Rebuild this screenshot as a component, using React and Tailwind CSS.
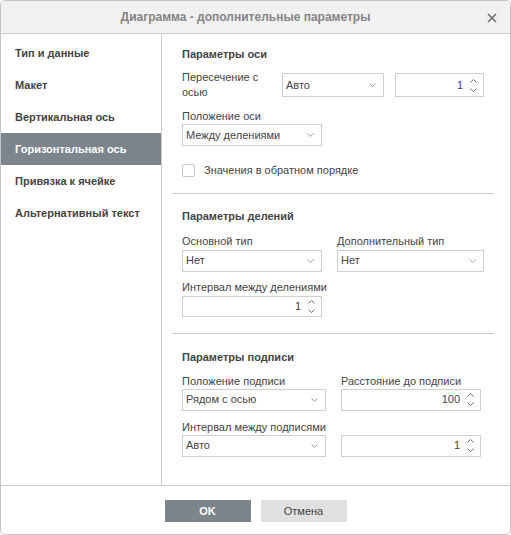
import React from "react";

const F = { fontFamily: '"Liberation Sans", Arial, sans-serif' };

function Chevron({ up = false }) {
  return (
    <svg width="7" height="4" viewBox="0 0 7 4" className="block">
      {up ? (
        <path d="M0.5 3.5 L3.5 0.5 L6.5 3.5" fill="none" stroke="#6b6b6b" strokeWidth="1" />
      ) : (
        <path d="M0.5 0.5 L3.5 3.5 L6.5 0.5" fill="none" stroke="#6b6b6b" strokeWidth="1" />
      )}
    </svg>
  );
}

function Select({ value, w, h = 22 }) {
  return (
    <div
      className="flex items-center justify-between border border-[#cfcfcf] bg-white pl-[3px] pr-[7px] text-[11px] text-[#444]"
      style={{ width: w, height: h }}
    >
      <span>{value}</span>
      <svg width="7" height="4" viewBox="0 0 7 4" className="block">
        <path d="M0.5 0.5 L3.5 3.5 L6.5 0.5" fill="none" stroke="#a0a0a0" strokeWidth="1" />
      </svg>
    </div>
  );
}

function Spinner({ value, w, h = 22 }) {
  return (
    <div
      className="flex items-center justify-end border border-[#cfcfcf] bg-white pr-[6px] text-[11px] text-[#444]"
      style={{ width: w, height: h }}
    >
      <span className="mr-[7px]">{value}</span>
      <div className="flex flex-col gap-[5px]">
        <Chevron up />
        <Chevron />
      </div>
    </div>
  );
}

function Label({ children, className = "" }) {
  return <div className={"h-[14px] leading-[14px] text-[11px] text-[#444] " + className}>{children}</div>;
}

function Title({ children, className = "" }) {
  return (
    <div className={"h-[14px] leading-[14px] text-[11px] font-bold text-[#444] " + className}>{children}</div>
  );
}

export default function App() {
  const items = [
    "Тип и данные",
    "Макет",
    "Вертикальная ось",
    "Горизонтальная ось",
    "Привязка к ячейке",
    "Альтернативный текст",
  ];
  return (
    <div style={F} className="w-[511px] h-[535px] bg-white">
      <div className="flex h-full w-full flex-col overflow-hidden rounded-[5px] border border-[#c4c4c4] bg-white">
        {/* header */}
        <div className="relative flex h-[33px] shrink-0 items-center justify-center border-b border-[#cbcbcb] bg-[#f1f1f1] pr-[20px]">
          <span className="text-[12px] font-bold text-[#848484]">Диаграмма - дополнительные параметры</span>
          <svg width="10" height="10" viewBox="0 0 10 10" className="absolute right-[13px] top-[12px]">
            <path d="M1 1 L9 9 M9 1 L1 9" stroke="#6f6f6f" strokeWidth="1.6" />
          </svg>
        </div>
        {/* body */}
        <div className="flex h-[451px] shrink-0">
          <div className="w-[161px] shrink-0 border-r border-[#cbcbcb] pt-[3px]">
            {items.map((t, i) => (
              <div
                key={t}
                className={
                  "flex h-[32px] items-center pl-[14px] text-[11px] font-bold " +
                  (i === 3 ? "bg-[#7d858c] text-white" : "text-[#444]")
                }
              >
                {t}
              </div>
            ))}
          </div>
          <div className="flex-1 flex flex-col">
            {/* section 1 */}
            <div className="pl-[20px] pt-[13px]">
              <Title>Параметры оси</Title>
              <div className="mt-[12px] flex h-[24px] items-center">
                <div className="w-[100px] text-[11px] leading-[15px] text-[#444]">
                  Пересечение с<br />осью
                </div>
                <Select value="Авто" w={102} h={24} />
                <div className="w-[11px]" />
                <Spinner value="1" w={89} h={24} />
              </div>
              <Label className="mt-[12px]">Положение оси</Label>
              <div className="mt-[1px]">
                <Select value="Между делениями" w={140} />
              </div>
              <div className="mt-[16px] flex items-center">
                <div className="h-[13px] w-[13px] rounded-[2px] border border-[#c8c8c8] bg-white" />
                <span className="ml-[9px] text-[11px] text-[#444]">Значения в обратном порядке</span>
              </div>
            </div>
            <div className="ml-[10px] mr-[16px] mt-[14px] border-t border-[#cbcbcb]" />
            {/* section 2 */}
            <div className="pl-[20px] pt-[15px]">
              <Title>Параметры делений</Title>
              <div className="mt-[11px] flex">
                <div className="w-[155px]">
                  <Label>Основной тип</Label>
                  <div className="mt-[2px]">
                    <Select value="Нет" w={140} />
                  </div>
                </div>
                <div>
                  <Label>Дополнительный тип</Label>
                  <div className="mt-[2px]">
                    <Select value="Нет" w={147} />
                  </div>
                </div>
              </div>
              <Label className="mt-[8px]">Интервал между делениями</Label>
              <div className="mt-[2px]">
                <Spinner value="1" w={140} h={21} />
              </div>
            </div>
            <div className="ml-[10px] mr-[16px] mt-[16px] border-t border-[#cbcbcb]" />
            {/* section 3 */}
            <div className="pl-[20px] pt-[16px]">
              <Title>Параметры подписи</Title>
              <div className="mt-[10px] flex">
                <div className="w-[159px]">
                  <Label>Положение подписи</Label>
                  <div className="mt-[1px]">
                    <Select value="Рядом с осью" w={144} />
                  </div>
                </div>
                <div>
                  <Label>Расстояние до подписи</Label>
                  <div className="mt-[1px]">
                    <Spinner value="100" w={140} />
                  </div>
                </div>
              </div>
              <Label className="mt-[9px]">Интервал между подписями</Label>
              <div className="mt-[1px] flex">
                <div className="w-[159px]">
                  <Select value="Авто" w={144} />
                </div>
                <Spinner value="1" w={140} />
              </div>
            </div>
          </div>
        </div>
        {/* footer */}
        <div className="flex flex-1 items-start justify-center gap-[10px] border-t border-[#cbcbcb] pt-[14px]">
          <div className="flex h-[22px] w-[86px] items-center justify-center bg-[#7d858c] text-[11px] font-bold text-white">
            OK
          </div>
          <div className="flex h-[22px] w-[86px] items-center justify-center bg-[#e0e0e0] text-[11px] text-[#444]">
            Отмена
          </div>
        </div>
      </div>
    </div>
  );
}
